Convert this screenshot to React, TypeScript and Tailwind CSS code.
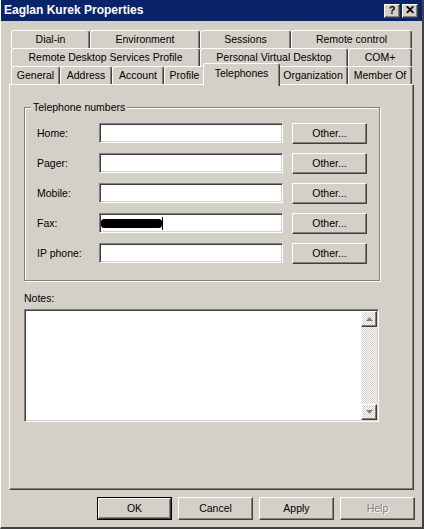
import clsx from "clsx";

const raised =
  "border border-t-white border-l-white border-r-[#404040] border-b-[#404040] shadow-[inset_-1px_-1px_0_#808080]";
const sunken =
  "border border-t-[#808080] border-l-[#808080] border-r-white border-b-white shadow-[inset_1px_1px_0_#404040,inset_-1px_-1px_0_#d4d0c8]";

type TabDef = { label: string; w: string; active?: boolean };

const ROWS: TabDef[][] = [
  [
    { label: "Dial-in", w: "w-[79px]" },
    { label: "Environment", w: "w-[110px]" },
    { label: "Sessions", w: "w-[91px]" },
    { label: "Remote control", w: "w-[121px]" },
  ],
  [
    { label: "Remote Desktop Services Profile", w: "w-[189px]" },
    { label: "Personal Virtual Desktop", w: "w-[148px]" },
    { label: "COM+", w: "w-[64px]" },
  ],
  [
    { label: "General", w: "w-[49px]" },
    { label: "Address", w: "w-[52px]" },
    { label: "Account", w: "w-[52px]" },
    { label: "Profile", w: "w-[41px]" },
    { label: "Telephones", w: "w-[73px]", active: true },
    { label: "Organization", w: "w-[70px]" },
    { label: "Member Of", w: "w-[64px]" },
  ],
];

const PHONES = ["Home:", "Pager:", "Mobile:", "Fax:", "IP phone:"];

function Tab({ tab }: { tab: TabDef }) {
  if (tab.active) {
    return (
      <div className="relative z-10 -mx-[2px] -mt-[3px] -mb-[2px] flex h-[23px] w-[77px] shrink-0 items-start justify-center rounded-t-[3px] border-l border-t border-r border-l-white border-t-white border-r-[#404040] bg-[#d4d0c8] pt-[3px] shadow-[inset_-1px_0_0_#808080]">
        {tab.label}
      </div>
    );
  }
  return (
    <div
      className={clsx(
        "flex h-[18px] shrink-0 items-center justify-center whitespace-nowrap rounded-t-[3px] border-l border-t border-r border-l-white border-t-white border-r-[#404040] shadow-[inset_-1px_0_0_#808080]",
        tab.w
      )}
    >
      {tab.label}
    </div>
  );
}

function Button({ label, def, disabled }: { label: string; def?: boolean; disabled?: boolean }) {
  if (def) {
    return (
      <div className="h-[23px] w-[75px] border border-black">
        <div className={clsx(raised, "flex h-full w-full items-center justify-center")}>{label}</div>
      </div>
    );
  }
  return (
    <div
      className={clsx(
        raised,
        "flex h-[23px] w-[75px] items-center justify-center",
        disabled && "text-[#808080] [text-shadow:1px_1px_0_#fff]"
      )}
    >
      {label}
    </div>
  );
}

function Arrow({ up }: { up?: boolean }) {
  return (
    <div className={clsx(raised, "flex h-[16px] w-[16px] items-center justify-center")}>
      <svg width="7" height="4" viewBox="0 0 7 4">
        {up ? (
          <path d="M3.5 0 L7 4 L0 4 Z" fill="#808080" />
        ) : (
          <path d="M0 0 L7 0 L3.5 4 Z" fill="#808080" />
        )}
      </svg>
    </div>
  );
}

export default function App() {
  return (
    <div
      className="flex h-[529px] w-[424px] flex-col border-l border-r-2 border-b-2 border-l-white border-r-[#404040] border-b-[#404040] bg-[#d4d0c8] text-[10.5px] leading-[13px] text-black"
      style={{ fontFamily: '"Liberation Sans", Arial, sans-serif' }}
    >
      {/* title bar */}
      <div className="flex h-[21px] shrink-0 items-center justify-between bg-[#0a246a] pl-[3px] pr-[4px]">
        <span className="text-[12px] font-bold text-white">Eaglan Kurek Properties</span>
        <div className="flex gap-[2px]">
          <div className={clsx(raised, "flex h-[14px] w-[16px] items-center justify-center bg-[#d4d0c8] text-[11px] font-bold")}>?</div>
          <div className={clsx(raised, "flex h-[14px] w-[16px] items-center justify-center bg-[#d4d0c8] text-[12px] font-bold")}>✕</div>
        </div>
      </div>

      {/* tabs */}
      <div className="mt-[9px] flex flex-col pl-[10px]">
        {ROWS.map((row, i) => (
          <div key={i} className="flex items-start">
            {row.map((t) => (
              <Tab key={t.label} tab={t} />
            ))}
          </div>
        ))}
      </div>

      {/* panel */}
      <div className="mx-[8px] flex h-[406px] flex-col border border-t-white border-l-white border-r-[#404040] border-b-[#404040] pl-[14px] pt-[22px] shadow-[inset_-1px_-1px_0_#808080]">
        <div className="relative h-[174px] w-[356px] border border-[#808080] shadow-[inset_1px_1px_0_#fff,1px_1px_0_#fff]">
          <span className="absolute -top-[7px] left-[6px] bg-[#d4d0c8] px-[2px]">Telephone numbers</span>
          <div className="flex flex-col gap-[10px] pl-[12px] pt-[15px]">
            {PHONES.map((p) => (
              <div key={p} className="flex h-[20px] items-center">
                <span className="w-[62px]">{p}</span>
                <div className={clsx(sunken, "relative h-[20px] w-[184px] bg-white")}>
                  {p === "Fax:" && (
                    <div className="flex h-full items-center pl-[1px]">
                      <div className="h-[9px] w-[61px] rounded-[3px] bg-black" />
                      <div className="h-[13px] w-[1px] bg-black" />
                    </div>
                  )}
                </div>
                <div className={clsx(raised, "ml-[9px] flex h-[21px] w-[75px] items-center justify-center")}>Other...</div>
              </div>
            ))}
          </div>
        </div>

        <div className="mt-[11px]">Notes:</div>
        <div className={clsx(sunken, "mt-[4px] flex h-[113px] w-[355px] justify-end bg-white p-[1px]")}>
          <div className="flex h-full w-[16px] flex-col justify-between bg-[repeating-conic-gradient(#fff_0%_25%,#d4d0c8_0%_50%)] bg-[length:2px_2px]">
            <Arrow up />
            <Arrow />
          </div>
        </div>
      </div>

      {/* buttons */}
      <div className="mt-[7px] flex justify-end gap-[6px] pr-[7px]">
        <Button label="OK" def />
        <Button label="Cancel" />
        <Button label="Apply" />
        <Button label="Help" disabled />
      </div>
    </div>
  );
}
